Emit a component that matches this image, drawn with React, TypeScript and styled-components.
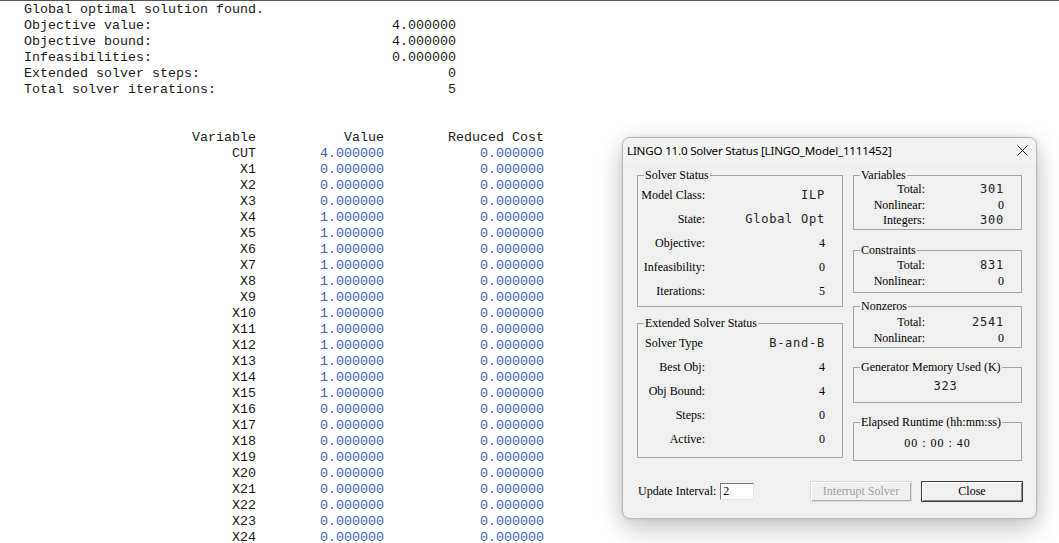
import React from 'react'
import styled, { createGlobalStyle } from 'styled-components'

const GlobalStyle = createGlobalStyle`
  html, body {
    margin: 0;
    padding: 0;
    background: #ffffff;
  }
  #root {
    width: 1059px;
    height: 543px;
    overflow: hidden;
  }
`

// report page (the LINGO solution window behind the dialog)
const Page = styled.div`
  position: relative;
  width: 1059px;
  height: 543px;
  box-sizing: border-box;
  overflow: hidden;
  border-top: 1px solid #555555;
  font-family: "Liberation Mono", "Courier New", monospace;
  font-size: 13.33px;
  line-height: 16px;
  color: #1a1a1a;
`

const Report = styled.div`
  padding-left: 24px;
  padding-top: 1px;
`

const SummaryLine = styled.div`
  display: flex;
  justify-content: space-between;
  width: 432px;
  white-space: pre;
`

const Table = styled.div`
  display: grid;
  grid-template-columns: 232px 128px 160px;
  margin-top: 32px;
  text-align: right;
  white-space: pre;
`

const Cell = styled.div<{ $num?: boolean }>`
  color: ${({ $num }) => ($num ? '#3463ad' : '#1a1a1a')};
`

// dialog window
const Dialog = styled.div`
  position: absolute;
  left: 622px;
  top: 136px;
  width: 415px;
  height: 382px;
  box-sizing: border-box;
  display: flex;
  flex-direction: column;
  background: #f0f0f0;
  border: 1px solid #b9b9b9;
  border-radius: 8px;
  box-shadow: 0 8px 26px rgba(0, 0, 0, 0.26), 0 0 3px rgba(0, 0, 0, 0.12);
  overflow: hidden;
  font-family: "Liberation Serif", "Times New Roman", serif;
  font-size: 12px;
  color: #000000;
`

const TitleBar = styled.div`
  height: 25px;
  flex: none;
  display: flex;
  align-items: center;
  justify-content: space-between;
  padding: 0 8px 0 4px;
  background: #f3f3f3;
  font-family: "Noto Sans", "Open Sans", sans-serif;
  font-size: 11.6px;
  letter-spacing: -0.2px;
  color: #000000;
`

const CloseGlyph = styled.svg`
  width: 11px;
  height: 11px;
  display: block;
`

const Body = styled.div`
  flex: 1;
  display: flex;
  flex-direction: column;
  padding: 12px 14px 0 14px;
`

const Columns = styled.div`
  display: flex;
  gap: 10px;
`

const Column = styled.div<{ $w: number }>`
  width: ${({ $w }) => $w}px;
  display: flex;
  flex-direction: column;
`

const Group = styled.div<{ $h: number; $mt?: number; $pt: number }>`
  position: relative;
  box-sizing: border-box;
  height: ${({ $h }) => $h}px;
  margin-top: ${({ $mt }) => $mt ?? 0}px;
  padding-top: ${({ $pt }) => $pt}px;
  border: 1px solid #a3a3a3;
`

const Legend = styled.span`
  position: absolute;
  top: -8px;
  left: 6px;
  padding: 0 1px;
  line-height: 14px;
  background: #f0f0f0;
  white-space: nowrap;
`

const StatusRow = styled.div<{ $lw: number; $rh: number; $left?: boolean }>`
  display: grid;
  grid-template-columns: ${({ $lw }) => $lw}px 1fr;
  align-items: center;
  height: ${({ $rh }) => $rh}px;
  padding-right: 17px;
  padding-left: ${({ $left }) => ($left ? 7 : 0)}px;

  & > span:first-child {
    text-align: ${({ $left }) => ($left ? 'left' : 'right')};
    white-space: nowrap;
  }
`

const monoStack = '"DejaVu Sans Mono", "Liberation Mono", monospace'
const serifStack = '"Liberation Serif", "Times New Roman", serif'

const Value = styled.span<{ $mono?: boolean }>`
  text-align: right;
  white-space: pre;
  font-family: ${({ $mono }) => ($mono ? monoStack : serifStack)};
  font-size: ${({ $mono }) => ($mono ? 12 : 12)}px;
  letter-spacing: ${({ $mono }) => ($mono ? 0.75 : 0)}px;
  color: ${({ $mono }) => ($mono ? '#222222' : '#000000')};
`

const CenterValue = styled.div<{ $shift?: number; $mono?: boolean }>`
  padding-left: ${({ $shift }) => $shift ?? 0}px;
  text-align: center;
  line-height: 14px;
  font-family: ${({ $mono }) => ($mono ? monoStack : serifStack)};
  font-size: 12px;
  letter-spacing: ${({ $mono }) => ($mono ? 0.75 : 1)}px;
  color: ${({ $mono }) => ($mono ? '#222222' : '#000000')};
`

const BottomBar = styled.div`
  display: flex;
  align-items: center;
  height: 22px;
  margin-top: 19px;
  padding-left: 1px;
`

const FieldLabel = styled.span`
  margin-right: 4px;
`

const IntervalInput = styled.div`
  box-sizing: border-box;
  width: 34px;
  height: 17px;
  padding-left: 2px;
  line-height: 15px;
  background: #ffffff;
  border-top: 1px solid #7a7a7a;
  border-left: 1px solid #7a7a7a;
  border-right: 1px solid #e3e3e3;
  border-bottom: 1px solid #e3e3e3;
`

const Buttons = styled.div`
  margin-left: auto;
  display: flex;
  gap: 9px;
  margin-right: -1px;
`

const WinButton = styled.div<{ $primary?: boolean; $disabled?: boolean }>`
  box-sizing: border-box;
  width: 102px;
  height: 21px;
  display: flex;
  align-items: center;
  justify-content: center;
  background: #f0f0f0;
  color: ${({ $disabled }) => ($disabled ? '#a0a0a0' : '#000000')};
  border: 1px solid ${({ $primary }) => ($primary ? '#3c3c3c' : '#dcdcdc')};
  box-shadow: ${({ $primary }) =>
    $primary
      ? 'inset 1px 1px 0 #ffffff, inset -1px -1px 0 #8a8a8a'
      : 'inset 1px 1px 0 #ffffff, inset -1px -1px 0 #a8a8a8'};
`

type Row = { name: string; value: string; cost: string }

const summary: [string, string][] = [
  ['Global optimal solution found.', ''],
  ['Objective value:', '4.000000'],
  ['Objective bound:', '4.000000'],
  ['Infeasibilities:', '0.000000'],
  ['Extended solver steps:', '0'],
  ['Total solver iterations:', '5'],
]

const ones = new Set([4, 5, 6, 7, 8, 9, 10, 11, 12, 13, 14, 15])
const rows: Row[] = [
  { name: 'CUT', value: '4.000000', cost: '0.000000' },
  ...Array.from({ length: 24 }, (_, i) => ({
    name: `X${i + 1}`,
    value: ones.has(i + 1) ? '1.000000' : '0.000000',
    cost: '0.000000',
  })),
]

const solverStatus: [string, string, boolean?][] = [
  ['Model Class:', 'ILP', true],
  ['State:', 'Global Opt', true],
  ['Objective:', '4'],
  ['Infeasibility:', '0'],
  ['Iterations:', '5'],
]

const extended: [string, string][] = [
  ['Best Obj:', '4'],
  ['Obj Bound:', '4'],
  ['Steps:', '0'],
  ['Active:', '0'],
]

export default function App() {
  return (
    <>
      <GlobalStyle />
      <Page>
        <Report>
          {summary.map(([label, val]) => (
            <SummaryLine key={label}>
              <span>{label}</span>
              <span>{val}</span>
            </SummaryLine>
          ))}
          <Table>
            <Cell>Variable</Cell>
            <Cell>Value</Cell>
            <Cell>Reduced Cost</Cell>
            {rows.map((r) => (
              <React.Fragment key={r.name}>
                <Cell>{r.name}</Cell>
                <Cell $num>{r.value}</Cell>
                <Cell $num>{r.cost}</Cell>
              </React.Fragment>
            ))}
          </Table>
        </Report>

        <Dialog>
          <TitleBar>
            <span>LINGO 11.0 Solver Status [LINGO_Model_1111452]</span>
            <CloseGlyph viewBox="0 0 11 11">
              <path d="M0.5 0.5 L10.5 10.5 M10.5 0.5 L0.5 10.5" stroke="#1a1a1a" strokeWidth="1" fill="none" />
            </CloseGlyph>
          </TitleBar>
          <Body>
            <Columns>
              <Column $w={206}>
                <Group $h={132} $pt={7}>
                  <Legend>Solver Status</Legend>
                  {solverStatus.map(([l, v, mono]) => (
                    <StatusRow key={l} $lw={67} $rh={24}>
                      <span>{l}</span>
                      <Value $mono={mono}>{v}</Value>
                    </StatusRow>
                  ))}
                </Group>
                <Group $h={135} $mt={16} $pt={7}>
                  <Legend>Extended Solver Status</Legend>
                  <StatusRow $lw={67} $rh={24} $left>
                    <span>Solver Type</span>
                    <Value $mono>B-and-B</Value>
                  </StatusRow>
                  {extended.map(([l, v]) => (
                    <StatusRow key={l} $lw={67} $rh={24}>
                      <span>{l}</span>
                      <Value>{v}</Value>
                    </StatusRow>
                  ))}
                </Group>
              </Column>

              <Column $w={169}>
                <Group $h={55} $pt={5}>
                  <Legend>Variables</Legend>
                  <StatusRow $lw={71} $rh={15.5}>
                    <span>Total:</span>
                    <Value $mono>301</Value>
                  </StatusRow>
                  <StatusRow $lw={71} $rh={15.5}>
                    <span>Nonlinear:</span>
                    <Value>0</Value>
                  </StatusRow>
                  <StatusRow $lw={71} $rh={15.5}>
                    <span>Integers:</span>
                    <Value $mono>300</Value>
                  </StatusRow>
                </Group>
                <Group $h={43} $mt={20} $pt={6}>
                  <Legend>Constraints</Legend>
                  <StatusRow $lw={71} $rh={15.5}>
                    <span>Total:</span>
                    <Value $mono>831</Value>
                  </StatusRow>
                  <StatusRow $lw={71} $rh={15.5}>
                    <span>Nonlinear:</span>
                    <Value>0</Value>
                  </StatusRow>
                </Group>
                <Group $h={42} $mt={13} $pt={7}>
                  <Legend>Nonzeros</Legend>
                  <StatusRow $lw={71} $rh={15.5}>
                    <span>Total:</span>
                    <Value $mono>2541</Value>
                  </StatusRow>
                  <StatusRow $lw={71} $rh={15.5}>
                    <span>Nonlinear:</span>
                    <Value>0</Value>
                  </StatusRow>
                </Group>
                <Group $h={36} $mt={19} $pt={11}>
                  <Legend>Generator Memory Used (K)</Legend>
                  <CenterValue $shift={16} $mono>323</CenterValue>
                </Group>
                <Group $h={39} $mt={19} $pt={13}>
                  <Legend>Elapsed Runtime (hh:mm:ss)</Legend>
                  <CenterValue>00 : 00 : 40</CenterValue>
                </Group>
              </Column>
            </Columns>

            <BottomBar>
              <FieldLabel>Update Interval:</FieldLabel>
              <IntervalInput>2</IntervalInput>
              <Buttons>
                <WinButton $disabled>Interrupt Solver</WinButton>
                <WinButton $primary>Close</WinButton>
              </Buttons>
            </BottomBar>
          </Body>
        </Dialog>
      </Page>
    </>
  )
}
